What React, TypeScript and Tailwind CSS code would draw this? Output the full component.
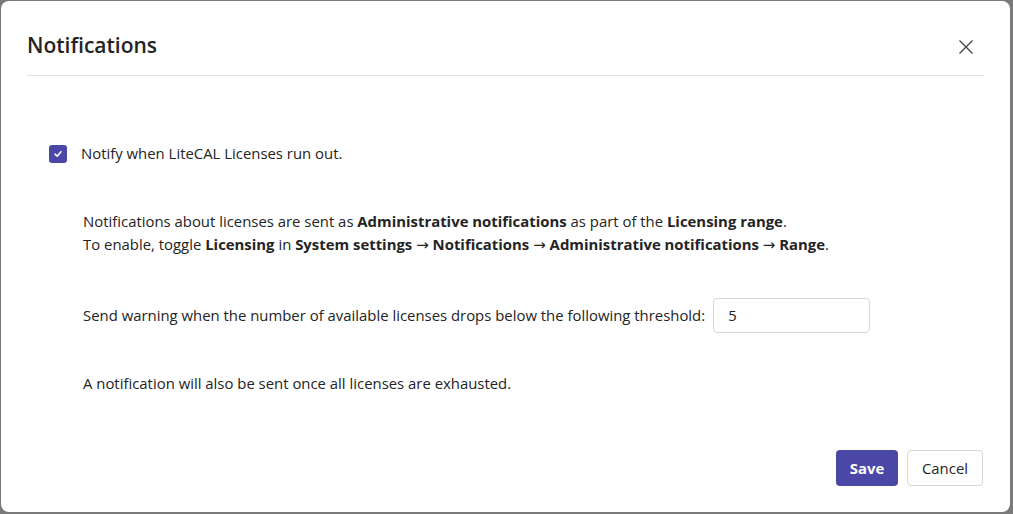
import React from "react";

const Arrow = () => <span style={{ fontFamily: '"DejaVu Sans", sans-serif' }} className="font-normal text-[15px]">→</span>;

export default function App() {
  return (
    <div className="w-[1013px] h-[514px] bg-[#7a7a7a] pt-px pl-px overflow-hidden" style={{ fontFamily: '"Segoe UI", "Open Sans", sans-serif' }}>
      <div className="w-[1009px] h-[511px] bg-white rounded-lg flex flex-col text-[#242424]">
        <div className="mx-[26px] h-[75px] border-b border-[#e0e0e0] flex items-start justify-between">
          <h1 className="text-[21px] font-semibold mt-[30px] leading-[28px]">Notifications</h1>
          <button className="mr-[10px] mt-[38px] text-[#424242]">
            <svg width="16" height="16" viewBox="0 0 16 16" fill="none" stroke="currentColor" strokeWidth="1.3">
              <path d="M1.5 1.5 L14.5 14.5 M14.5 1.5 L1.5 14.5" />
            </svg>
          </button>
        </div>
        <div className="flex-1 flex flex-col text-[14.9px] leading-[23px]">
          <label className="flex items-center gap-[14px] ml-[48px] mt-[66px]">
            <span className="w-[18px] h-[18px] rounded-[3px] bg-[#4a47a6] flex items-center justify-center">
              <svg width="10" height="10" viewBox="0 0 10 10" fill="none" stroke="white" strokeWidth="1.6" strokeLinecap="round" strokeLinejoin="round">
                <path d="M2 5.2 L4.2 7.2 L8 2.8" />
              </svg>
            </span>
            <span>Notify when LiteCAL Licenses run out.</span>
          </label>
          <div className="ml-[82px] mt-[45px]">
            <p>
              Notifications about licenses are sent as <b className="font-bold">Administrative notifications</b> as part of the <b className="font-bold">Licensing range</b>.
            </p>
            <p>
              To enable, toggle <b className="font-bold">Licensing</b> in <b className="font-bold">System settings <Arrow /> Notifications <Arrow /> Administrative notifications <Arrow /> Range</b>.
            </p>
            <div className="flex items-center gap-[8px] mt-[41px]">
              <span>Send warning when the number of available licenses drops below the following threshold:</span>
              <div className="w-[157px] h-[35px] border border-[#d6d6d6] rounded-[4px] flex items-center pl-[14px]">5</div>
            </div>
            <p className="mt-[39px]">A notification will also be sent once all licenses are exhausted.</p>
          </div>
          <div className="flex justify-end gap-[9px] mr-[27px] mt-auto mb-[26px]">
            <button className="w-[62px] h-[36px] rounded-[4px] bg-[#4a47a6] text-white font-bold">Save</button>
            <button className="w-[76px] h-[36px] rounded-[4px] border border-[#d6d6d6] bg-white">Cancel</button>
          </div>
        </div>
      </div>
    </div>
  );
}
